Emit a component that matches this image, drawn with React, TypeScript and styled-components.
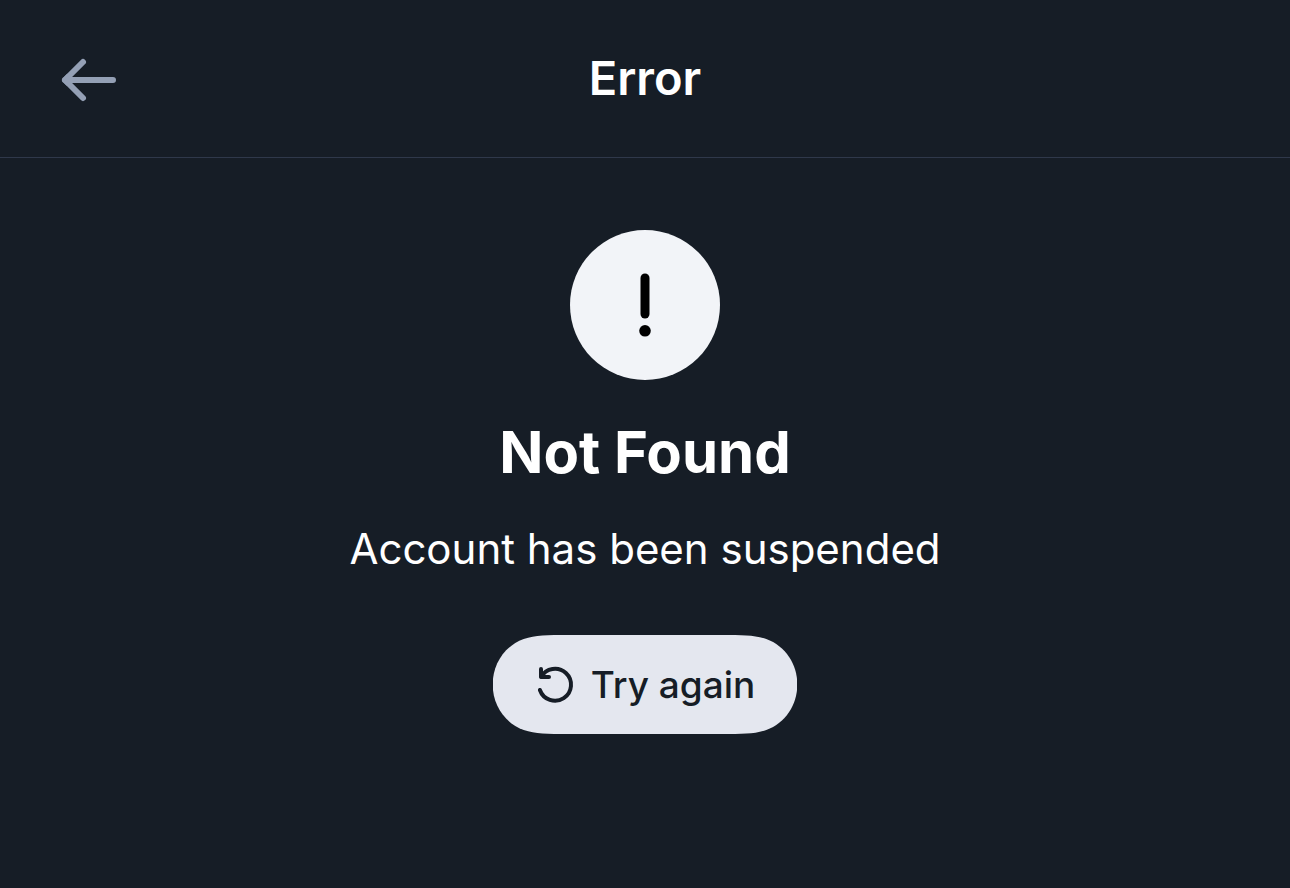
import React from "react";
import styled, { createGlobalStyle } from "styled-components";

const GlobalStyle = createGlobalStyle`
  * { box-sizing: border-box; }
  body {
    margin: 0;
    background: #161d26;
    color: #ffffff;
    font-family: Inter, "Liberation Sans", sans-serif;
  }
`;

const Screen = styled.div`
  display: flex;
  flex-direction: column;
  min-height: 100vh;
`;

const Header = styled.header`
  display: grid;
  grid-template-columns: 60px 1fr 60px;
  align-items: center;
  padding: 48px 60px 49px;
  border-bottom: 1px solid #2f384a;
`;

const BackButton = styled.button`
  display: flex;
  padding: 4px 0 0;
  border: 0;
  background: none;
  color: #94a0b5;
  cursor: pointer;
`;

const HeaderTitle = styled.h1`
  margin: 0;
  font-size: 47px;
  line-height: 60px;
  font-weight: 600;
  text-align: center;
`;

const Content = styled.main`
  display: flex;
  flex-direction: column;
  align-items: center;
  padding: 72px 48px;
  text-align: center;
`;

const Badge = styled.div`
  display: flex;
  width: 150px;
  height: 150px;
  border-radius: 50%;
  background: #f2f4f8;
  color: #000000;
`;

const Title = styled.h2`
  margin: 36px 0 0;
  font-size: 58px;
  line-height: 72px;
  font-weight: 700;
`;

const Message = styled.p`
  margin: 31px 0 0;
  font-size: 42px;
  line-height: 60px;
  font-weight: 400;
`;

/* Pill with continuous corners: the curve eases into the straight edges. */
const RetryButton = styled.button`
  display: flex;
  align-items: center;
  gap: 16px;
  margin-top: 56px;
  padding: 24px 42px;
  border: 0;
  border-radius: 50px;
  background: #e4e7ef;
  color: #161d26;
  font-family: inherit;
  font-size: 37px;
  line-height: 51px;
  font-weight: 500;
  cursor: pointer;

  @supports (clip-path: shape(from 0 0, line to 1px 1px, close)) {
    border-radius: 0;
    clip-path: shape(
      from 76px 0,
      line to calc(100% - 76px) 0,
      curve to calc(100% - 31px) 4px with calc(100% - 54px) 0 / calc(100% - 43px) 0,
      curve to 100% 50% with calc(100% - 12px) 11px / 100% 29px,
      curve to calc(100% - 31px) calc(100% - 4px) with 100% calc(100% - 29px) / calc(100% - 12px) calc(100% - 11px),
      curve to calc(100% - 76px) 100% with calc(100% - 43px) 100% / calc(100% - 54px) 100%,
      line to 76px 100%,
      curve to 31px calc(100% - 4px) with 54px 100% / 43px 100%,
      curve to 0 50% with 12px calc(100% - 11px) / 0 calc(100% - 29px),
      curve to 31px 4px with 0 29px / 12px 11px,
      curve to 76px 0 with 43px 0 / 54px 0,
      close
    );
  }
`;

const ArrowLeft = () => (
  <svg width="60" height="48" viewBox="0 0 60 48" fill="none" stroke="currentColor" strokeWidth="6" strokeLinecap="round" strokeLinejoin="round" aria-hidden="true">
    <path d="M53 24H5M23 6L5 24L23 42" />
    <path d="M5 24L8 21V27Z" fill="currentColor" />
  </svg>
);

const Exclamation = () => (
  <svg width="150" height="150" viewBox="0 0 150 150" aria-hidden="true">
    <path d="M75 48V84" stroke="currentColor" strokeWidth="9" strokeLinecap="round" />
    <circle cx="75" cy="100.8" r="5.8" fill="currentColor" />
  </svg>
);

const Retry = () => (
  <svg width="40" height="40" viewBox="0 0 40 40" fill="none" stroke="currentColor" strokeWidth="4" strokeLinecap="round" strokeLinejoin="round" aria-hidden="true">
    <path d="M6 4V12H14M6 12A16 16 0 1 1 4.9 25" />
  </svg>
);

export default function App() {
  return (
    <>
      <GlobalStyle />
      <Screen>
        <Header>
          <BackButton type="button" aria-label="Go back">
            <ArrowLeft />
          </BackButton>
          <HeaderTitle>Error</HeaderTitle>
        </Header>
        <Content>
          <Badge>
            <Exclamation />
          </Badge>
          <Title>Not Found</Title>
          <Message>Account has been suspended</Message>
          <RetryButton type="button">
            <Retry />
            Try again
          </RetryButton>
        </Content>
      </Screen>
    </>
  );
}
